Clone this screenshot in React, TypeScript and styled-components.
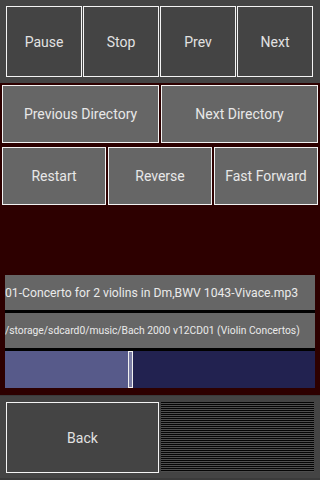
import React from "react";
import styled, { createGlobalStyle } from "styled-components";

const GlobalStyle = createGlobalStyle`
  html, body { margin: 0; padding: 0; background: #2d0000; }
  body { font-family: Roboto, "Noto Sans", "Liberation Sans", sans-serif; }
  * { box-sizing: border-box; }
`;

const Screen = styled.div`
  width: 320px;
  height: 480px;
  background: #2d0000;
  display: flex;
  flex-direction: column;
  overflow: hidden;
`;

const TopPanel = styled.div`
  height: 83px;
  background: #444444;
  padding: 6px 6px 6px 6px;
  display: grid;
  grid-template-columns: repeat(4, 76px);
  column-gap: 1px;
`;

const OutlineButton = styled.button`
  margin: 0;
  padding: 0;
  background: transparent;
  border: 1px solid #f4f4f4;
  color: #e2e2e2;
  font-family: Roboto, "Noto Sans", sans-serif;
  font-size: 14px;
  display: flex;
  align-items: center;
  justify-content: center;
`;

const Row = styled.div<{ $cols: number; $top: number }>`
  display: grid;
  grid-template-columns: repeat(${(p) => p.$cols}, 1fr);
  column-gap: 2px;
  padding: 0 2px;
  margin-top: ${(p) => p.$top}px;
  height: 58px;
`;

const GrayButton = styled.button`
  margin: 0;
  padding: 0;
  background: #666666;
  border: 1px solid #f2f2f2;
  color: #e8e8e8;
  font-family: Roboto, "Noto Sans", sans-serif;
  font-size: 14px;
  display: flex;
  align-items: center;
  justify-content: center;
  white-space: nowrap;
`;

const Spacer = styled.div`
  flex: 1;
`;

const InfoGroup = styled.div`
  margin: 0 5px;
  background: #000000;
  display: flex;
  flex-direction: column;
  row-gap: 3px;
`;

const InfoLine = styled.div<{ $size: number }>`
  height: 35px;
  background: #666666;
  color: #eaeaea;
  font-size: ${(p) => p.$size}px;
  display: flex;
  align-items: center;
  white-space: nowrap;
  overflow: hidden;
`;

const SeekBar = styled.div`
  height: 37px;
  background: #222250;
  display: flex;
`;

const SeekFill = styled.div`
  background: #575a8a;
  height: 100%;
`;

const SeekThumb = styled.div`
  width: 5px;
  height: 100%;
  border: 1px solid #f0f0f0;
  background: #7a7ca4;
`;

const BottomPanel = styled.div`
  margin-top: 7px;
  height: 85px;
  background: #444444;
  border-top: 1px solid #3a3a3a;
  border-bottom: 2px solid #3b3b3b;
  padding: 6px 6px 0 6px;
  display: grid;
  grid-template-columns: 153px 153px;
  grid-template-rows: 71px;
  column-gap: 2px;
`;

const Stripes = styled.div`
  height: 70px;
  background: repeating-linear-gradient(
    to bottom,
    #050505 0px,
    #050505 1px,
    #4e4e4e 1px,
    #4e4e4e 2px
  );
`;

export default function App() {
  const progress = 123;
  return (
    <>
      <GlobalStyle />
      <Screen>
        <TopPanel>
          <OutlineButton>Pause</OutlineButton>
          <OutlineButton>Stop</OutlineButton>
          <OutlineButton>Prev</OutlineButton>
          <OutlineButton>Next</OutlineButton>
        </TopPanel>
        <Row $cols={2} $top={2}>
          <GrayButton>Previous Directory</GrayButton>
          <GrayButton>Next Directory</GrayButton>
        </Row>
        <Row $cols={3} $top={4}>
          <GrayButton>Restart</GrayButton>
          <GrayButton>Reverse</GrayButton>
          <GrayButton>Fast Forward</GrayButton>
        </Row>
        <Spacer />
        <InfoGroup>
          <InfoLine $size={12.2}>01-Concerto for 2 violins in Dm,BWV 1043-Vivace.mp3</InfoLine>
          <InfoLine $size={10.3}>/storage/sdcard0/music/Bach 2000 v12CD01 (Violin Concertos)</InfoLine>
          <SeekBar>
            <SeekFill style={{ width: progress }} />
            <SeekThumb />
          </SeekBar>
        </InfoGroup>
        <BottomPanel>
          <OutlineButton>Back</OutlineButton>
          <Stripes />
        </BottomPanel>
      </Screen>
    </>
  );
}
